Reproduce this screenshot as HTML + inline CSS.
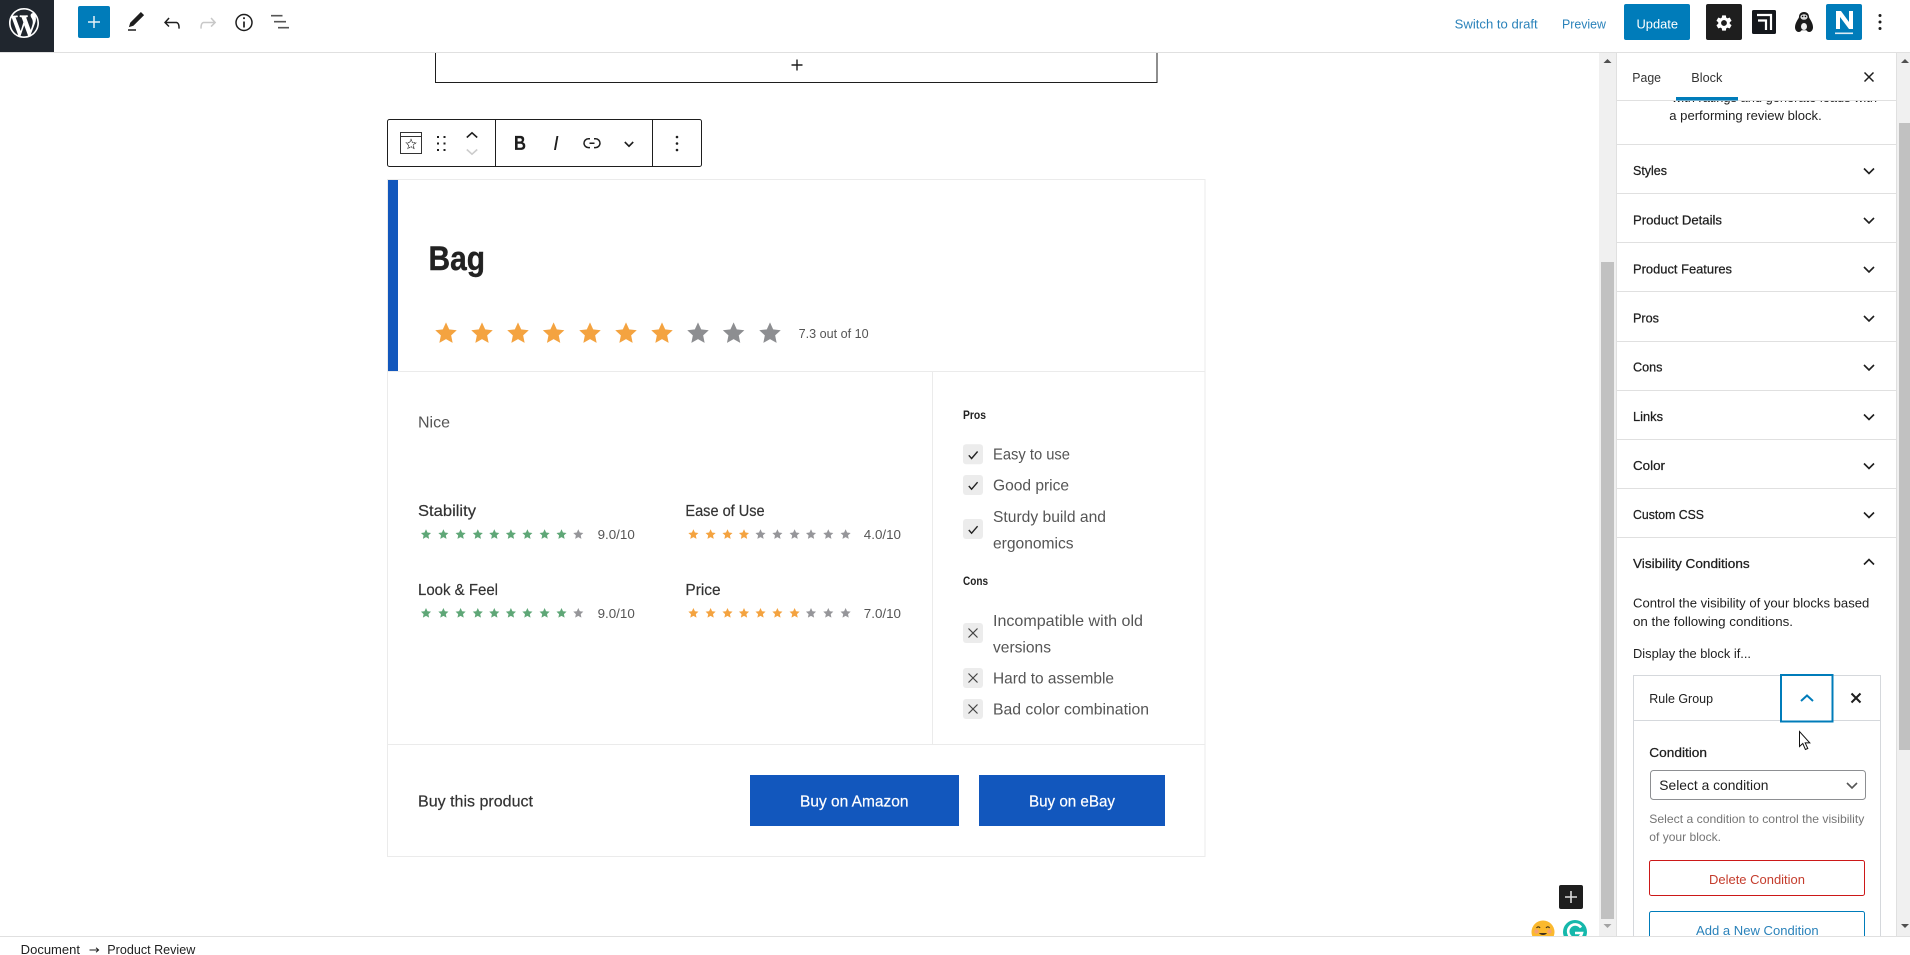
<!DOCTYPE html>
<html lang="en"><head><meta charset="utf-8"><title>Edit Product Review</title>
<style>
html,body{margin:0;padding:0;background:#fff;width:1910px;height:955px;overflow:hidden}
svg{display:block}
text{font-family:"Liberation Sans",sans-serif;white-space:pre}
.s{font-size:13px;fill:#1e1e1e}
.m{font-size:13px;fill:#1e1e1e;stroke:#1e1e1e;stroke-width:.25}
.b{font-size:16px;fill:#555;transform:translateY(-.5px)}
.h{font-size:16px;fill:#333;stroke:#333;stroke-width:.2}
.r{font-size:13px;fill:#555}
.c{fill:none;stroke:#1e1e1e;stroke-width:1.6}
</style></head><body>
<svg width="1910" height="955" viewBox="0 0 1910 955" xmlns="http://www.w3.org/2000/svg">
<defs>
<path id="l" transform="scale(11.3)" d="M0-1L.282-.388.951-.309.456.148.588.809 0 .48-.588.809-.456.148-.951-.309-.282-.388Z"/>
<path id="t" transform="scale(5.3)" d="M0-1L.282-.388.951-.309.456.148.588.809 0 .48-.588.809-.456.148-.951-.309-.282-.388Z"/>
<g id="ck"><rect width="20" height="20" rx="3" fill="#ececec"/><path d="M5.8 11l2.8 3.2L14.6 7.2" fill="none" stroke="#222" stroke-width="1.4"/></g>
<g id="xx"><rect width="20" height="20" rx="3" fill="#ececec"/><path d="M5.5 5.5l9 9M14.5 5.5l-9 9" fill="none" stroke="#444" stroke-width="1.2"/></g>
<path id="chev" class="c" d="M-5-2L0 3 5-2"/>
<clipPath id="cl"><rect x="1618" y="101" width="278" height="20"/></clipPath>
<clipPath id="bot"><rect x="1500" y="880" width="120" height="56"/></clipPath>
</defs>

<!-- top bar -->
<rect x="0" y="52" width="1910" height="1" fill="#e0e0e0"/>
<rect width="54" height="52" fill="#20262e"/>
<path transform="translate(9 8) scale(1.5)" fill="#fff" fill-rule="evenodd" d="M20 10c0-5.51-4.49-10-10-10C4.48 0 0 4.49 0 10c0 5.52 4.48 10 10 10 5.51 0 10-4.48 10-10zM7.78 15.37L4.37 6.22c.55-.02 1.17-.08 1.17-.08.5-.06.44-1.13-.06-1.11 0 0-1.45.11-2.37.11-.18 0-.37 0-.58-.01C4.12 2.69 6.87 1.11 10 1.11c2.33 0 4.45.87 6.05 2.34-.68-.11-1.65.39-1.65 1.58 0 .74.45 1.36.9 2.1.35.61.55 1.36.55 2.46 0 1.49-1.4 5-1.4 5l-3.03-8.37c.54-.02.82-.17.82-.17.5-.05.44-1.25-.06-1.22 0 0-1.44.12-2.38.12-.87 0-2.33-.12-2.33-.12-.5-.03-.56 1.2-.06 1.22l.92.08 1.26 3.41zM17.41 10c.24-.64.74-1.87.43-4.25.7 1.29 1.05 2.71 1.05 4.25 0 3.29-1.73 6.24-4.4 7.78.97-2.59 1.94-5.2 2.92-7.78zM6.1 18.09C3.12 16.65 1.11 13.53 1.11 10c0-1.3.23-2.48.72-3.59C3.25 10.3 4.67 14.2 6.1 18.09zm4.03-6.63l2.58 6.98c-.86.29-1.76.45-2.71.45-.79 0-1.57-.11-2.29-.33.81-2.38 1.62-4.74 2.42-7.1z"/>
<rect x="78" y="6" width="32" height="32" rx="2" fill="#007cba"/>
<path d="M94 16v12M88 22h12" stroke="#e6f2f8" stroke-width="1.5"/>
<path transform="translate(124 10)" fill="#1e1e1e" d="M20.1 5.1L16.9 2 6.2 12.7l-1.3 4.4 4.5-1.3L20.1 5.1zM4 20.8h8v-1.5H4v1.5z"/>
<path transform="translate(160 11)" fill="#1e1e1e" d="M18.3 11.7c-.6-.6-1.4-.9-2.3-.9H6.7l2.9-3.3-1.1-1-4.5 5L8.5 16l1-1-2.7-2.7H16c.5 0 .9.2 1.3.5 1 1 1 3.4 1 4.5v.3h1.5v-.2c0-1.5 0-4.3-1.5-5.7z"/>
<path transform="translate(196 11)" fill="#c8c8c8" d="M15.6 6.5l-1.1 1 2.9 3.3H8c-.9 0-1.7.3-2.3.9-1.4 1.5-1.4 4.2-1.4 5.7v.2h1.5v-.3c0-1.1 0-3.5 1-4.5.3-.3.7-.5 1.3-.5h9.2L14.5 15l1.1 1.1 4.6-4.6-4.6-5z"/>
<circle cx="244" cy="22.5" r="8" fill="none" stroke="#1e1e1e" stroke-width="1.5"/>
<path d="M244 21.5v6" stroke="#1e1e1e" stroke-width="1.7"/><rect x="243.1" y="17.3" width="1.8" height="1.8" fill="#1e1e1e"/>
<path d="M271 15.7h11.5M274 21.7h12M278 27.7h11" stroke="#555" stroke-width="1.6"/>
<text class="s" x="1454.7" y="28.3" textLength="83" lengthAdjust="spacingAndGlyphs" style="fill:#2a82ba">Switch to draft</text>
<text class="s" x="1562" y="28.3" textLength="44" lengthAdjust="spacingAndGlyphs" style="fill:#2a82ba">Preview</text>
<rect x="1624" y="4" width="66" height="36" rx="2" fill="#007cba"/>
<text class="s" x="1636.5" y="28.3" textLength="41.5" lengthAdjust="spacingAndGlyphs" style="fill:#fff">Update</text>
<rect x="1706" y="4" width="36" height="36" rx="2" fill="#1e1e1e"/>
<path transform="translate(1714.4 13.4) scale(.8)" fill="#fff" d="M19.14 12.94c.04-.3.06-.61.06-.94 0-.32-.02-.64-.07-.94l2.03-1.58c.18-.14.23-.41.12-.61l-1.92-3.32c-.12-.22-.37-.29-.59-.22l-2.39.96c-.5-.38-1.03-.7-1.62-.94l-.36-2.54c-.04-.24-.24-.41-.48-.41h-3.84c-.24 0-.43.17-.47.41l-.36 2.54c-.59.24-1.13.57-1.62.94l-2.39-.96c-.22-.08-.47 0-.59.22L2.74 8.87c-.12.21-.08.47.12.61l2.03 1.58c-.05.3-.09.63-.09.94s.02.64.07.94l-2.03 1.58c-.18.14-.23.41-.12.61l1.92 3.32c.12.22.37.29.59.22l2.39-.96c.5.38 1.03.7 1.62.94l.36 2.54c.05.24.24.41.48.41h3.84c.24 0 .44-.17.47-.41l.36-2.54c.59-.24 1.13-.56 1.62-.94l2.39.96c.22.08.47 0 .59-.22l1.92-3.32c.12-.22.07-.47-.12-.61l-2.01-1.58zM12 15.6c-1.98 0-3.6-1.62-3.6-3.6s1.62-3.6 3.6-3.6 3.6 1.62 3.6 3.6-1.62 3.6-3.6 3.6z"/>
<rect x="1752" y="10" width="24" height="24" rx="1.5" fill="#14171c"/>
<path d="M1757 15h14v15M1758 20.5h8V30" fill="none" stroke="#fff" stroke-width="2.2"/>
<!-- penguin -->
<path fill="#1a1a1a" d="M1804 12c3.2 0 5 2.2 5 4.8 0 1.2 1 2.2 2 4 1.3 2.4 2 4.5 2 6.5 0 2.6-1.6 4.7-3.6 4.7-1.6 0-2.4-1-3-1.8h-4.8c-.6.8-1.4 1.8-3 1.8-2 0-3.6-2.1-3.6-4.7 0-2 .7-4.1 2-6.5 1-1.8 2-2.8 2-4 0-2.6 1.8-4.8 5-4.8z"/>
<ellipse cx="1804" cy="17" rx="3.6" ry="2.8" fill="#ddd"/><circle cx="1802.6" cy="16.4" r=".8" fill="#111"/><circle cx="1805.4" cy="16.4" r=".8" fill="#111"/>
<ellipse cx="1804" cy="26.5" rx="3" ry="3.5" fill="#eee"/>
<rect x="1826" y="4" width="36" height="36" rx="2" fill="#007cba"/>
<path fill="#fff" d="M1836 11h5l8 11V11h4v18h-4l-9-12v12h-4z"/><rect x="1835" y="32.5" width="18" height="1.6" fill="#dcebf4"/>
<g fill="#1e1e1e"><circle cx="1880" cy="15.5" r="1.5"/><circle cx="1880" cy="22" r="1.5"/><circle cx="1880" cy="28.5" r="1.5"/></g>

<!-- top partial block -->
<path d="M435.5 53v29.5h721.5V53" fill="none" stroke="#1e1e1e" stroke-width="1"/>
<path d="M797 59.5v11M791.5 65h11" stroke="#1e1e1e" stroke-width="1.4"/>

<!-- block toolbar -->
<rect x="387.5" y="119.5" width="314" height="47" rx="2" fill="#fff" stroke="#1e1e1e"/>
<path d="M495.5 120v46M652.5 120v46" stroke="#1e1e1e"/>
<rect x="400.5" y="132.5" width="21" height="21" fill="none" stroke="#333"/>
<path d="M401 136.5h20" stroke="#333"/>
<path d="M411 139.5l1.4 3 3.3.4-2.4 2.2.7 3.3-3-1.7-3 1.7.7-3.3-2.4-2.2 3.3-.4z" fill="none" stroke="#333" stroke-width=".9" stroke-dasharray="1.5 .7"/>
<g fill="#1e1e1e"><rect x="437" y="136" width="2" height="2"/><rect x="443.5" y="136" width="2" height="2"/><rect x="437" y="142.5" width="2" height="2"/><rect x="443.5" y="142.5" width="2" height="2"/><rect x="437" y="149" width="2" height="2"/><rect x="443.5" y="149" width="2" height="2"/></g>
<path d="M466.8 137.5l5.2-4.7 5.2 4.7" fill="none" stroke="#1e1e1e" stroke-width="1.6"/>
<path d="M466.8 149.5l5.2 4.7 5.2-4.7" fill="none" stroke="#ccc" stroke-width="1.6"/>
<path transform="translate(508 131)" fill="#1e1e1e" d="M14.7 11.3c1-.6 1.5-1.6 1.5-3 0-2.3-1.3-3.4-4-3.4H7v14h5.8c1.4 0 2.5-.3 3.3-1 .8-.7 1.2-1.7 1.2-2.9.1-1.9-.8-3.1-2.6-3.7zm-5.1-4h2.3c.6 0 1.1.1 1.4.4.3.3.5.7.5 1.2s-.2 1-.5 1.2c-.3.3-.8.4-1.4.4H9.6V7.3zm4.6 9c-.4.3-1 .4-1.7.4H9.6v-3.9h2.9c.7 0 1.3.2 1.7.6.4.4.6.8.6 1.5s-.2 1.1-.6 1.4z"/>
<path transform="translate(544 131)" fill="#1e1e1e" d="M12.5 5L10 19h1.9l2.5-14z"/>
<path transform="translate(580 131)" fill="#1e1e1e" d="M10 17.389H8.444A5.194 5.194 0 1 1 8.444 7H10v1.5H8.444a3.694 3.694 0 0 0 0 7.389H10v1.5ZM14 7h1.556a5.194 5.194 0 0 1 0 10.39H14v-1.5h1.556a3.694 3.694 0 0 0 0-7.39H14V7Zm-4.5 6h5v-1.5h-5V13Z"/>
<path d="M624.8 142l4.2 4.2 4.2-4.2" fill="none" stroke="#1e1e1e" stroke-width="1.6"/>
<g fill="#1e1e1e"><circle cx="677" cy="137" r="1.3"/><circle cx="677" cy="143.5" r="1.3"/><circle cx="677" cy="150" r="1.3"/></g>

<!-- review card -->
<rect x="387.5" y="179.5" width="817.5" height="677" fill="#fff" stroke="#ebebeb"/>
<rect x="388" y="180" width="10" height="191" fill="#1257bd"/>
<path d="M388 371.5h817M388 744.5h817M932.5 372v372" stroke="#ebebeb"/>
<text x="428.5" y="270" font-size="34" font-weight="700" fill="#222" stroke="#222" stroke-width=".4" textLength="56.5" lengthAdjust="spacingAndGlyphs">Bag</text>
<g fill="#f4a340"><use href="#l" x="446" y="333.7"/><use href="#l" x="482" y="333.7"/><use href="#l" x="518" y="333.7"/><use href="#l" x="553.6" y="333.7"/><use href="#l" x="590" y="333.7"/><use href="#l" x="626" y="333.7"/><use href="#l" x="662" y="333.7"/></g>
<g fill="#8d8e91"><use href="#l" x="698" y="333.7"/><use href="#l" x="733.6" y="333.7"/><use href="#l" x="770" y="333.7"/></g>
<text class="r" x="798.6" y="338" textLength="70" lengthAdjust="spacingAndGlyphs">7.3 out of 10</text>
<text class="b" x="418" y="428" textLength="32" lengthAdjust="spacingAndGlyphs">Nice</text>

<text class="h" x="418" y="516" textLength="58" lengthAdjust="spacingAndGlyphs">Stability</text>
<g fill="#5fa777"><use href="#t" x="426" y="534.6"/><use href="#t" x="443.4" y="534.6"/><use href="#t" x="460.6" y="534.6"/><use href="#t" x="477.8" y="534.6"/><use href="#t" x="494.3" y="534.6"/><use href="#t" x="510.9" y="534.6"/><use href="#t" x="527.4" y="534.6"/><use href="#t" x="544.6" y="534.6"/><use href="#t" x="561.5" y="534.6"/></g>
<use href="#t" x="578.3" y="534.6" fill="#96969a"/>
<text class="r" x="597.6" y="539" textLength="37.2" lengthAdjust="spacingAndGlyphs">9.0/10</text>

<text class="h" x="685.4" y="516" textLength="79.2" lengthAdjust="spacingAndGlyphs">Ease of Use</text>
<g fill="#f4a340"><use href="#t" x="693.4" y="534.6"/><use href="#t" x="710.6" y="534.6"/><use href="#t" x="727.5" y="534.6"/><use href="#t" x="744" y="534.6"/></g>
<g fill="#96969a"><use href="#t" x="760.5" y="534.6"/><use href="#t" x="777.4" y="534.6"/><use href="#t" x="794.6" y="534.6"/><use href="#t" x="811" y="534.6"/><use href="#t" x="828.3" y="534.6"/><use href="#t" x="845.6" y="534.6"/></g>
<text class="r" x="863.8" y="539" textLength="37.2" lengthAdjust="spacingAndGlyphs">4.0/10</text>

<text class="h" x="418" y="595" textLength="80" lengthAdjust="spacingAndGlyphs">Look &amp; Feel</text>
<g fill="#5fa777"><use href="#t" x="426" y="613.3"/><use href="#t" x="443.4" y="613.3"/><use href="#t" x="460.6" y="613.3"/><use href="#t" x="477.8" y="613.3"/><use href="#t" x="494.3" y="613.3"/><use href="#t" x="510.9" y="613.3"/><use href="#t" x="527.4" y="613.3"/><use href="#t" x="544.6" y="613.3"/><use href="#t" x="561.5" y="613.3"/></g>
<use href="#t" x="578.3" y="613.3" fill="#96969a"/>
<text class="r" x="597.6" y="618" textLength="37.2" lengthAdjust="spacingAndGlyphs">9.0/10</text>

<text class="h" x="685.4" y="595" textLength="35.2" lengthAdjust="spacingAndGlyphs">Price</text>
<g fill="#f4a340"><use href="#t" x="693.4" y="613.3"/><use href="#t" x="710.6" y="613.3"/><use href="#t" x="727.5" y="613.3"/><use href="#t" x="744" y="613.3"/><use href="#t" x="760.5" y="613.3"/><use href="#t" x="777.4" y="613.3"/><use href="#t" x="794.6" y="613.3"/></g>
<g fill="#96969a"><use href="#t" x="811" y="613.3"/><use href="#t" x="828.3" y="613.3"/><use href="#t" x="845.6" y="613.3"/></g>
<text class="r" x="863.8" y="618" textLength="37.2" lengthAdjust="spacingAndGlyphs">7.0/10</text>

<text x="963" y="419" font-size="11.5" font-weight="700" fill="#222" textLength="23" lengthAdjust="spacingAndGlyphs">Pros</text>
<use href="#ck" x="963" y="444.3"/><text class="b" x="993" y="460" textLength="77" lengthAdjust="spacingAndGlyphs">Easy to use</text>
<use href="#ck" x="963" y="475"/><text class="b" x="993" y="491" textLength="76" lengthAdjust="spacingAndGlyphs">Good price</text>
<use href="#ck" x="963" y="519"/><text class="b" x="993" y="522.3" textLength="113" lengthAdjust="spacingAndGlyphs">Sturdy build and</text>
<text class="b" x="993" y="549" textLength="80.6" lengthAdjust="spacingAndGlyphs">ergonomics</text>
<text x="963" y="585" font-size="11.5" font-weight="700" fill="#222" textLength="25" lengthAdjust="spacingAndGlyphs">Cons</text>
<use href="#xx" x="963" y="623"/><text class="b" x="993" y="626.7" textLength="150" lengthAdjust="spacingAndGlyphs">Incompatible with old</text>
<text class="b" x="993" y="653" textLength="58" lengthAdjust="spacingAndGlyphs">versions</text>
<use href="#xx" x="963" y="668"/><text class="b" x="993" y="684" textLength="121" lengthAdjust="spacingAndGlyphs">Hard to assemble</text>
<use href="#xx" x="963" y="699"/><text class="b" x="993" y="715" textLength="156" lengthAdjust="spacingAndGlyphs">Bad color combination</text>

<text class="h" x="418" y="806.7" textLength="115" lengthAdjust="spacingAndGlyphs">Buy this product</text>
<rect x="750" y="775" width="209" height="51" fill="#1257bd"/>
<rect x="979" y="775" width="186" height="51" fill="#1257bd"/>
<text class="h" x="800" y="806.7" textLength="108.5" lengthAdjust="spacingAndGlyphs" style="fill:#fff;stroke:#fff">Buy on Amazon</text>
<text class="h" x="1029" y="806.7" textLength="86" lengthAdjust="spacingAndGlyphs" style="fill:#fff;stroke:#fff">Buy on eBay</text>

<!-- floating -->
<rect x="1559" y="885" width="24" height="24" rx="2" fill="#1e1e1e"/>
<path d="M1571 891v12M1565 897h12" stroke="#ddd" stroke-width="1.6"/>
<g clip-path="url(#bot)">
<circle cx="1543" cy="932" r="11.5" fill="#fbb92e"/>
<circle cx="1536.5" cy="931.5" r="2.2" fill="#f5a070"/><circle cx="1549.5" cy="931.5" r="2.2" fill="#f5a070"/>
<path d="M1536.5 928c1-1.6 2.6-1.6 3.6 0M1546 928c1-1.6 2.6-1.6 3.6 0" fill="none" stroke="#40301a" stroke-width="1.1"/>
<path d="M1539 933c1.4 2.6 6.6 2.6 8 0z" fill="#40301a"/>
<circle cx="1575" cy="932" r="12" fill="#15b8ab"/>
<path d="M1581 927.5a7 7 0 1 0 1 5.5h-7" fill="none" stroke="#fff" stroke-width="2.6"/>
</g>

<!-- scrollbars -->
<rect x="1599" y="53" width="18" height="883" fill="#f0f0f0"/>
<rect x="1601" y="262" width="13" height="657" fill="#c1c1c1"/>
<path d="M1607.5 59l4 4h-8z" fill="#505050"/><path d="M1603.5 924h8l-4 4z" fill="#a3a3a3"/>
<rect x="1897" y="53" width="13" height="883" fill="#f0f0f0"/>
<rect x="1899" y="123" width="11" height="627" fill="#c1c1c1"/>
<path d="M1905 59l4 4h-8z" fill="#505050"/><path d="M1901 924h8l-4 4z" fill="#505050"/>

<!-- sidebar -->
<rect x="1617" y="53" width="280" height="883" fill="#fff"/>
<path d="M1616.5 53v883M1896.5 53v883" stroke="#e0e0e0"/>
<text class="s" x="1672" y="102" textLength="205" lengthAdjust="spacingAndGlyphs" clip-path="url(#cl)">with ratings and generate leads with</text>
<text class="s" x="1669.3" y="120" textLength="152.4" lengthAdjust="spacingAndGlyphs">a performing review block.</text>
<text class="s" x="1632.3" y="82" textLength="28.7" lengthAdjust="spacingAndGlyphs" style="fill:#333">Page</text>
<text class="s" x="1691.3" y="82" textLength="31" lengthAdjust="spacingAndGlyphs" style="fill:#333">Block</text>
<path d="M1617 100.5h280" stroke="#e0e0e0"/>
<rect x="1676" y="97" width="62" height="3.5" fill="#007cba"/>
<path d="M1864.5 72.5l9 9M1873.5 72.5l-9 9" stroke="#1e1e1e" stroke-width="1.5"/>
<path d="M1617 144.5h280M1617 193.5h280M1617 242.5h280M1617 291.5h280M1617 341.5h280M1617 390.5h280M1617 439.5h280M1617 488.5h280M1617 537.5h280" stroke="#e0e0e0"/>
<text class="m" x="1633" y="175" textLength="34" lengthAdjust="spacingAndGlyphs">Styles</text>
<text class="m" x="1633" y="224.5" textLength="89" lengthAdjust="spacingAndGlyphs">Product Details</text>
<text class="m" x="1633" y="273.5" textLength="99" lengthAdjust="spacingAndGlyphs">Product Features</text>
<text class="m" x="1633" y="322.5" textLength="26" lengthAdjust="spacingAndGlyphs">Pros</text>
<text class="m" x="1633" y="371.5" textLength="29.5" lengthAdjust="spacingAndGlyphs">Cons</text>
<text class="m" x="1633" y="421" textLength="30" lengthAdjust="spacingAndGlyphs">Links</text>
<text class="m" x="1633" y="470" textLength="32" lengthAdjust="spacingAndGlyphs">Color</text>
<text class="m" x="1633" y="519" textLength="71" lengthAdjust="spacingAndGlyphs">Custom CSS</text>
<text class="m" x="1633" y="568" textLength="116.7" lengthAdjust="spacingAndGlyphs">Visibility Conditions</text>
<use href="#chev" x="1869" y="170.5"/><use href="#chev" x="1869" y="220"/><use href="#chev" x="1869" y="269"/><use href="#chev" x="1869" y="318"/><use href="#chev" x="1869" y="367"/><use href="#chev" x="1869" y="416.5"/><use href="#chev" x="1869" y="465.5"/><use href="#chev" x="1869" y="514.5"/>
<path class="c" d="M1864 564.5l5-5 5 5"/>
<text class="s" x="1633" y="607.3" textLength="236.3" lengthAdjust="spacingAndGlyphs">Control the visibility of your blocks based</text>
<text class="s" x="1633" y="626" textLength="160" lengthAdjust="spacingAndGlyphs">on the following conditions.</text>
<text class="s" x="1633" y="658" textLength="118" lengthAdjust="spacingAndGlyphs">Display the block if...</text>
<rect x="1633.5" y="675.5" width="247" height="280" fill="none" stroke="#d5d8dc"/>
<path d="M1634 720.5h246" stroke="#d5d8dc"/>
<text class="s" x="1649.3" y="703" textLength="63.7" lengthAdjust="spacingAndGlyphs">Rule Group</text>
<rect x="1781" y="675" width="51.5" height="46.5" fill="#fff" stroke="#007cba" stroke-width="2"/>
<path d="M1801 701l6-5.5 6 5.5" fill="none" stroke="#007cba" stroke-width="2"/>
<path d="M1851.5 693.5l9 9M1860.5 693.5l-9 9" stroke="#1e1e1e" stroke-width="2"/>
<path d="M1799.5 731.5v15l3.3-3 2.6 6 2.4-1-2.6-5.6h4.6z" fill="#fff" stroke="#111" stroke-width="1"/>
<text class="m" x="1649.3" y="757" textLength="57.7" lengthAdjust="spacingAndGlyphs">Condition</text>
<rect x="1650.5" y="770.5" width="215" height="29" rx="3" fill="#fff" stroke="#8d8f92"/>
<text class="s" x="1659.3" y="790" textLength="109.2" lengthAdjust="spacingAndGlyphs" style="font-size:14px">Select a condition</text>
<path d="M1847 783l5 5 5-5" fill="none" stroke="#555" stroke-width="1.6"/>
<text class="s" x="1649.3" y="823" textLength="215" lengthAdjust="spacingAndGlyphs" style="font-size:12px;fill:#757575">Select a condition to control the visibility</text>
<text class="s" x="1649.3" y="841" textLength="71.7" lengthAdjust="spacingAndGlyphs" style="font-size:12px;fill:#757575">of your block.</text>
<rect x="1649.5" y="860.5" width="215" height="35" rx="2" fill="#fff" stroke="#cc1818"/>
<text class="s" x="1709" y="884" textLength="96" lengthAdjust="spacingAndGlyphs" style="fill:#c43c2c">Delete Condition</text>
<rect x="1649.5" y="911.5" width="215" height="35" rx="2" fill="#fff" stroke="#007cba"/>
<text class="s" x="1696" y="935" textLength="122.7" lengthAdjust="spacingAndGlyphs" style="fill:#2a82ba">Add a New Condition</text>

<!-- bottom bar -->
<rect x="0" y="936" width="1910" height="19" fill="#fff"/>
<rect x="0" y="936" width="1910" height="1" fill="#e0e0e0"/>
<text class="s" x="20.7" y="954" textLength="59.3" lengthAdjust="spacingAndGlyphs">Document</text>
<path d="M89.5 950h9M96 947.8l2.6 2.2-2.6 2.2" fill="none" stroke="#1e1e1e" stroke-width="1"/>
<text class="s" x="107.3" y="954" textLength="88" lengthAdjust="spacingAndGlyphs">Product Review</text>
</svg>
</body></html>
